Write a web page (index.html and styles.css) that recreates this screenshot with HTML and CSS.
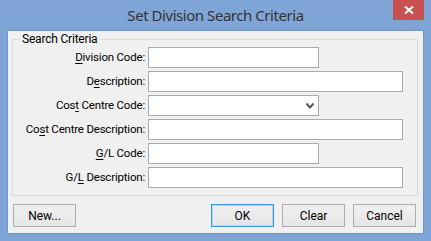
FILE: index.html
```html
<!DOCTYPE html>
<html>
<head>
<meta charset="utf-8">
<link rel="stylesheet" href="styles.css">
</head>
<body>
<div class="window">
  <div class="titlebar">
    <span class="spacer"></span>
    <span class="title">Set Division Search Criteria</span>
    <span class="ctrls">
      <span class="close">
        <svg width="10" height="8" viewBox="0 0 10 8"><path d="M1 0.5 L9 7.5 M9 0.5 L1 7.5" stroke="#fff" stroke-width="2" fill="none"/></svg>
      </span>
    </span>
  </div>
  <div class="client">
    <fieldset class="group">
      <legend>Search Criteria</legend>
      <div class="rows">
        <label class="lbl"><u>D</u>ivision Code:</label>
        <div class="field short"></div>
        <label class="lbl">D<u>e</u>scription:</label>
        <div class="field long"></div>
        <label class="lbl">Cos<u>t</u> Centre Code:</label>
        <div class="field short combo">
          <svg width="8" height="6" viewBox="0 0 8 6"><path d="M0.5 0.5 L4 4.5 L7.5 0.5" stroke="#555" stroke-width="2" fill="none"/></svg>
        </div>
        <label class="lbl">Co<u>s</u>t Centre Description:</label>
        <div class="field long"></div>
        <label class="lbl"><u>G</u>/L Code:</label>
        <div class="field short"></div>
        <label class="lbl">G/<u>L</u> Description:</label>
        <div class="field long"></div>
      </div>
    </fieldset>
    <div class="buttons">
      <button class="btn">New...</button>
      <span class="fill"></span>
      <button class="btn default">OK</button>
      <button class="btn">Clear</button>
      <button class="btn">Cancel</button>
    </div>
  </div>
</div>
</body>
</html>
```

FILE: styles.css
```css
html, body {
  margin: 0;
  padding: 0;
}
body {
  width: 431px;
  height: 241px;
  overflow: hidden;
  font-family: Roboto, "Noto Sans", sans-serif;
}
.window {
  width: 431px;
  height: 241px;
  box-sizing: border-box;
  background: #7fa5d7;
  display: flex;
  flex-direction: column;
  padding: 0 8px 8px 8px;
}
.titlebar {
  height: 31px;
  flex: none;
  display: grid;
  grid-template-columns: 1fr auto 1fr;
  align-items: start;
}
.title {
  font-family: "Noto Sans", sans-serif;
  font-size: 15px;
  line-height: 30px;
  color: #333;
  white-space: nowrap;
  letter-spacing: -0.45px;
}
.ctrls {
  display: flex;
  justify-content: flex-end;
  margin-right: -1px;
}
.close {
  width: 31px;
  height: 20px;
  background: #c75050;
  display: flex;
  align-items: center;
  justify-content: center;
}
.client {
  flex: 1;
  background: #f0f0f0;
  box-shadow: 0 0 0 1px #6f96c8;
  display: flex;
  flex-direction: column;
  padding: 0 7px 0 4px;
}
.group {
  margin: 1px -2px 0 0;
  padding: 0;
  height: 164px;
  box-sizing: border-box;
  border: 1px solid #dcdcdc;
  font-family: Roboto, "Noto Sans", sans-serif;
  font-size: 11.5px;
  letter-spacing: -0.2px;
  color: #000;
}
.group legend {
  padding: 0 2px;
  margin-left: 7px;
  line-height: 14px;
  font-size: 12px;
}
.rows {
  display: grid;
  grid-template-columns: 132px auto;
  column-gap: 3px;
  row-gap: 3px;
  grid-auto-rows: 21px;
  margin-top: 1px;
}
.lbl {
  text-align: right;
  line-height: 21px;
  white-space: nowrap;
}
.lbl u {
  text-underline-offset: 2px;
}
.field {
  box-sizing: border-box;
  height: 21px;
  background: #fff;
  border: 1px solid #ababab;
}
.short { width: 171px; }
.long { width: 255px; }
.combo {
  display: flex;
  align-items: center;
  justify-content: flex-end;
  padding-right: 4px;
}
.buttons {
  display: flex;
  margin-top: 8px;
  gap: 8px;
  padding-left: 1px;
}
.fill { flex: 1; }
.btn {
  width: 63px;
  height: 23px;
  box-sizing: border-box;
  border: 1px solid #acacac;
  background: linear-gradient(#f0f0f0, #e5e5e5);
  font-family: Roboto, "Noto Sans", sans-serif;
  font-size: 12px;
  color: #000;
  padding: 0;
  margin: 0;
}
.btn.default {
  border-color: #3399ff;
  box-shadow: inset 0 0 0 1px #b5d6f7;
}
```
